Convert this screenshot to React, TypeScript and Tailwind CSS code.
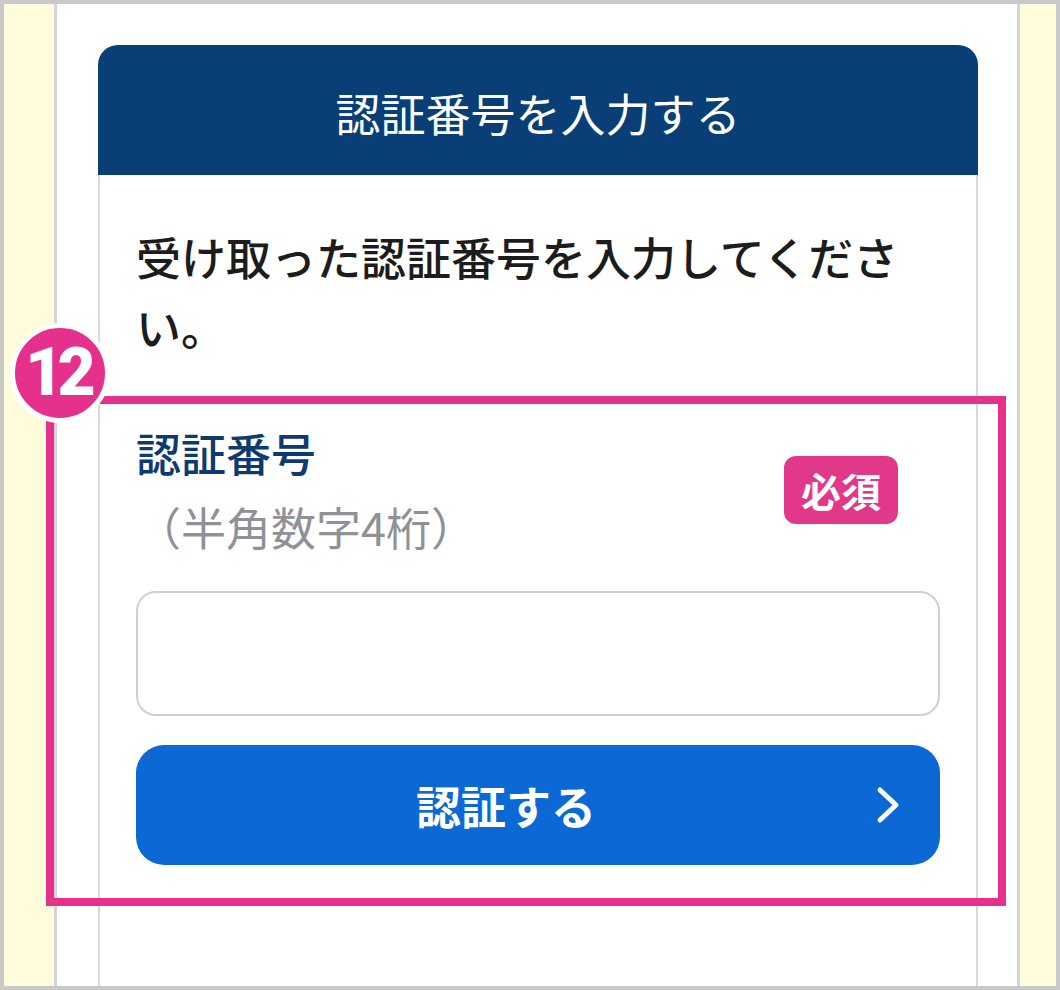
export default function App() {
  return (
    <div className="relative w-[1060px] h-[990px] bg-[#c9c9c9] p-1 font-['Noto_Sans_CJK_JP',sans-serif]">
      <div className="flex h-full">
        <div className="w-[50px] bg-[#fffcdc]" />
        <div className="w-[3px] bg-[#d4d5da]" />

        {/* phone screen */}
        <div className="flex w-[960px] flex-col bg-white pl-[41px] pt-[41px]">
          <div className="flex w-[880px] flex-1 flex-col">
            <div className="flex h-[130px] items-center justify-center rounded-t-[20px] bg-[#093f76] pt-[4px] text-[45px] leading-none text-white">
              認証番号を入力する
            </div>
            <div className="flex-1 border-x-2 border-[#d6d8dc] px-[36px] pt-[47px]">
              <p className="text-[45px] leading-[70px] font-medium text-[#1c1c1c]">
                受け取った認証番号を入力してください。
              </p>

              <div className="mt-[54px] flex items-center justify-between">
                <div className="text-[45px] leading-[74px]">
                  <div className="font-medium text-[#0d3a70]">認証番号</div>
                  <div className="text-[#8e9195]">（半角数字4桁）</div>
                </div>
                <span className="mr-[42px] flex h-[68px] w-[114px] items-center justify-center rounded-[12px] bg-[#e2388a] text-[40px] font-bold leading-none text-white">
                  必須
                </span>
              </div>

              <div className="mt-[27px] h-[125px] rounded-[20px] border-2 border-[#cfd0d2]" />

              <div className="mt-[29px] flex h-[120px] items-center rounded-[28px] bg-[#0b68d4] pr-[39px]">
                <span className="flex-1 text-center text-[45px] font-bold leading-none text-white">
                  認証する
                </span>
                <svg width="25" height="38" viewBox="0 0 25 38" fill="none">
                  <polyline
                    points="4,4 20,19 4,34"
                    stroke="white"
                    strokeWidth="5"
                    strokeLinecap="round"
                    strokeLinejoin="round"
                  />
                </svg>
              </div>
            </div>
          </div>
        </div>

        <div className="w-[3px] bg-[#d4d5da]" />
        <div className="flex-1 bg-[#fffcdc]" />
      </div>

      {/* annotation frame */}
      <div className="absolute left-[46px] top-[396px] h-[510px] w-[960px] border-[8px] border-[#e5318b]" />
      <div className="absolute left-[10px] top-[323px] flex h-[100px] w-[100px] items-center justify-center rounded-full border-[5px] border-white bg-[#e5318b]">
        <span className="font-['Roboto',sans-serif] text-[66px] font-black leading-none tracking-[-6px] text-white pr-[5px]">
          12
        </span>
      </div>
    </div>
  );
}
